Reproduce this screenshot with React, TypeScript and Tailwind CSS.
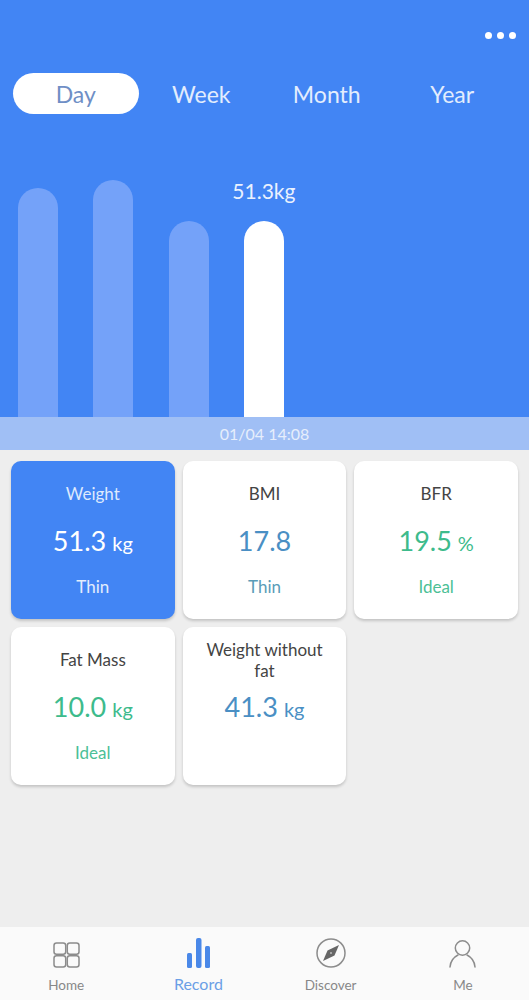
import { ReactNode } from 'react';

const tabs = ['Day', 'Week', 'Month', 'Year'];

const bars = [
  { h: 'h-[229px]', color: 'bg-[#74a2f9]' },
  { h: 'h-[237px]', color: 'bg-[#74a2f9]' },
  { h: 'h-[196px]', color: 'bg-[#74a2f9]' },
  { h: 'h-[196px]', color: 'bg-white', label: '51.3kg' },
];

interface Metric {
  title: string;
  value: string;
  unit?: string;
  status?: string;
  tone: 'active' | 'blue' | 'green';
}

const metrics: Metric[] = [
  { title: 'Weight', value: '51.3', unit: 'kg', status: 'Thin', tone: 'active' },
  { title: 'BMI', value: '17.8', status: 'Thin', tone: 'blue' },
  { title: 'BFR', value: '19.5', unit: '%', status: 'Ideal', tone: 'green' },
  { title: 'Fat Mass', value: '10.0', unit: 'kg', status: 'Ideal', tone: 'green' },
  { title: 'Weight without fat', value: '41.3', unit: 'kg', tone: 'blue' },
];

function MetricCard({ m }: { m: Metric }) {
  const active = m.tone === 'active';
  const valueColor = active ? 'text-white' : m.tone === 'blue' ? 'text-[#4a8fc4]' : 'text-[#3dbb8c]';
  const statusColor = active ? 'text-[#e3edfd]' : m.tone === 'blue' ? 'text-[#5a9cb8]' : 'text-[#4cbf96]';
  const twoLine = m.title.length > 12;
  return (
    <div
      className={`flex h-[158px] flex-col items-center rounded-[10px] px-[20px] text-center shadow-[0_2px_3px_rgba(0,0,0,0.18)] ${
        active ? 'bg-[#4285f4]' : 'bg-white'
      } ${twoLine ? 'pt-[12px]' : 'pt-[22px]'}`}
    >
      <div className={`text-[17px] leading-[21px] ${active ? 'text-[#dde9fd]' : 'text-[#444]'}`}>{m.title}</div>
      <div className={`flex h-[38px] items-baseline leading-[38px] ${twoLine ? 'mt-[7px]' : 'mt-[18px]'} ${valueColor}`}>
        <span className="text-[27px]">{m.value}</span>
        {m.unit && <span className="ml-[6px] text-[20px]">{m.unit}</span>}
      </div>
      {m.status && <div className={`mt-[16px] text-[17px] leading-[21px] ${statusColor}`}>{m.status}</div>}
    </div>
  );
}

function NavItem({ icon, label, active }: { icon: ReactNode; label: string; active?: boolean }) {
  return (
    <div className="flex w-[132.5px] flex-col items-center">
      <div className="flex h-[40px] items-end">{icon}</div>
      <div className={`leading-[18px] ${active ? 'mt-[7px] text-[16px] text-[#6b9fe6]' : 'mt-[8px] text-[13.5px] text-[#888888]'}`}>
        {label}
      </div>
    </div>
  );
}

const HomeIcon = (
  <svg width="27" height="26" viewBox="0 0 27 26" fill="none" stroke="#8c8c8c" strokeWidth="1.5">
    <rect x="1" y="1" width="11.7" height="11.2" rx="2.5" />
    <rect x="14.3" y="1" width="11.7" height="11.2" rx="2.5" />
    <rect x="1" y="13.8" width="11.7" height="11.2" rx="2.5" />
    <rect x="14.3" y="13.8" width="11.7" height="11.2" rx="2.5" />
  </svg>
);

const RecordIcon = (
  <svg width="23" height="30" viewBox="0 0 23 30" fill="#4a88e8">
    <rect x="0" y="15" width="5" height="15" rx="1.5" />
    <rect x="9" y="0" width="5.5" height="30" rx="2" />
    <rect x="18" y="8" width="5" height="22" rx="1.5" />
  </svg>
);

const CompassIcon = (
  <svg width="30" height="30" viewBox="0 0 30 30" fill="none">
    <circle cx="15" cy="15" r="14" stroke="#8c8c8c" strokeWidth="1.5" />
    <path d="M23 7 L18.5 17.5 L7 23 L11.5 12.5 Z" fill="#666666" />
    <circle cx="15" cy="15" r="1" fill="#bdbdbd" />
  </svg>
);

const UserIcon = (
  <svg width="27" height="28" viewBox="0 0 27 28" fill="none" stroke="#8c8c8c" strokeWidth="1.5" strokeLinecap="round">
    <circle cx="13.5" cy="8" r="7.2" />
    <path d="M1 27 C1.5 21 5 17 9 15" />
    <path d="M26 27 C25.5 21 22 17 18 15" />
  </svg>
);

export default function App() {
  return (
    <div className="flex h-[1000px] w-[529px] flex-col overflow-hidden bg-[#eeeeee] font-['Lato','Noto_Sans',sans-serif]">
      <div className="h-[417px] bg-[#4285f4]">
        <div className="flex justify-end gap-[5px] pr-[13px] pt-[32px]">
          <span className="h-[7px] w-[7px] rounded-full bg-white" />
          <span className="h-[7px] w-[7px] rounded-full bg-white" />
          <span className="h-[7px] w-[7px] rounded-full bg-white" />
        </div>

        <div className="mt-[34px] flex h-[41px] items-center pl-[13px] pr-[14px]">
          {tabs.map((t, i) => (
            <div
              key={t}
              className={`flex h-[41px] w-[126px] items-center justify-center rounded-full pt-[1px] text-[23px] ${
                i === 0 ? 'bg-white text-[#6f8fc6]' : 'text-[#e3edfd]'
              }`}
            >
              {t}
            </div>
          ))}
        </div>

        <div className="mt-[66px] flex h-[237px] items-end gap-[35.3px] pl-[18px]">
          {bars.map((b, i) => (
            <div key={i} className="relative w-[40px]">
              {b.label && (
                <span className="absolute bottom-[213px] left-1/2 -translate-x-1/2 text-[21px] leading-[26px] text-[#eaf1fe]">
                  {b.label}
                </span>
              )}
              <div className={`${b.h} rounded-t-full ${b.color}`} />
            </div>
          ))}
        </div>
      </div>

      <div className="flex h-[33px] items-center justify-center bg-[#a0bff5] pt-[1px] text-[16px] text-[#e6eefc]">
        01/04 14:08
      </div>

      <div className="grid grid-cols-3 gap-x-[8px] gap-y-[8px] px-[11px] pt-[11px]">
        {metrics.map((m) => (
          <MetricCard key={m.title} m={m} />
        ))}
      </div>

      <div className="mt-auto flex h-[73px] items-start bg-[#fafafa] pt-[1px]">
        <NavItem icon={HomeIcon} label="Home" />
        <NavItem icon={RecordIcon} label="Record" active />
        <NavItem icon={CompassIcon} label="Discover" />
        <NavItem icon={UserIcon} label="Me" />
      </div>
    </div>
  );
}
